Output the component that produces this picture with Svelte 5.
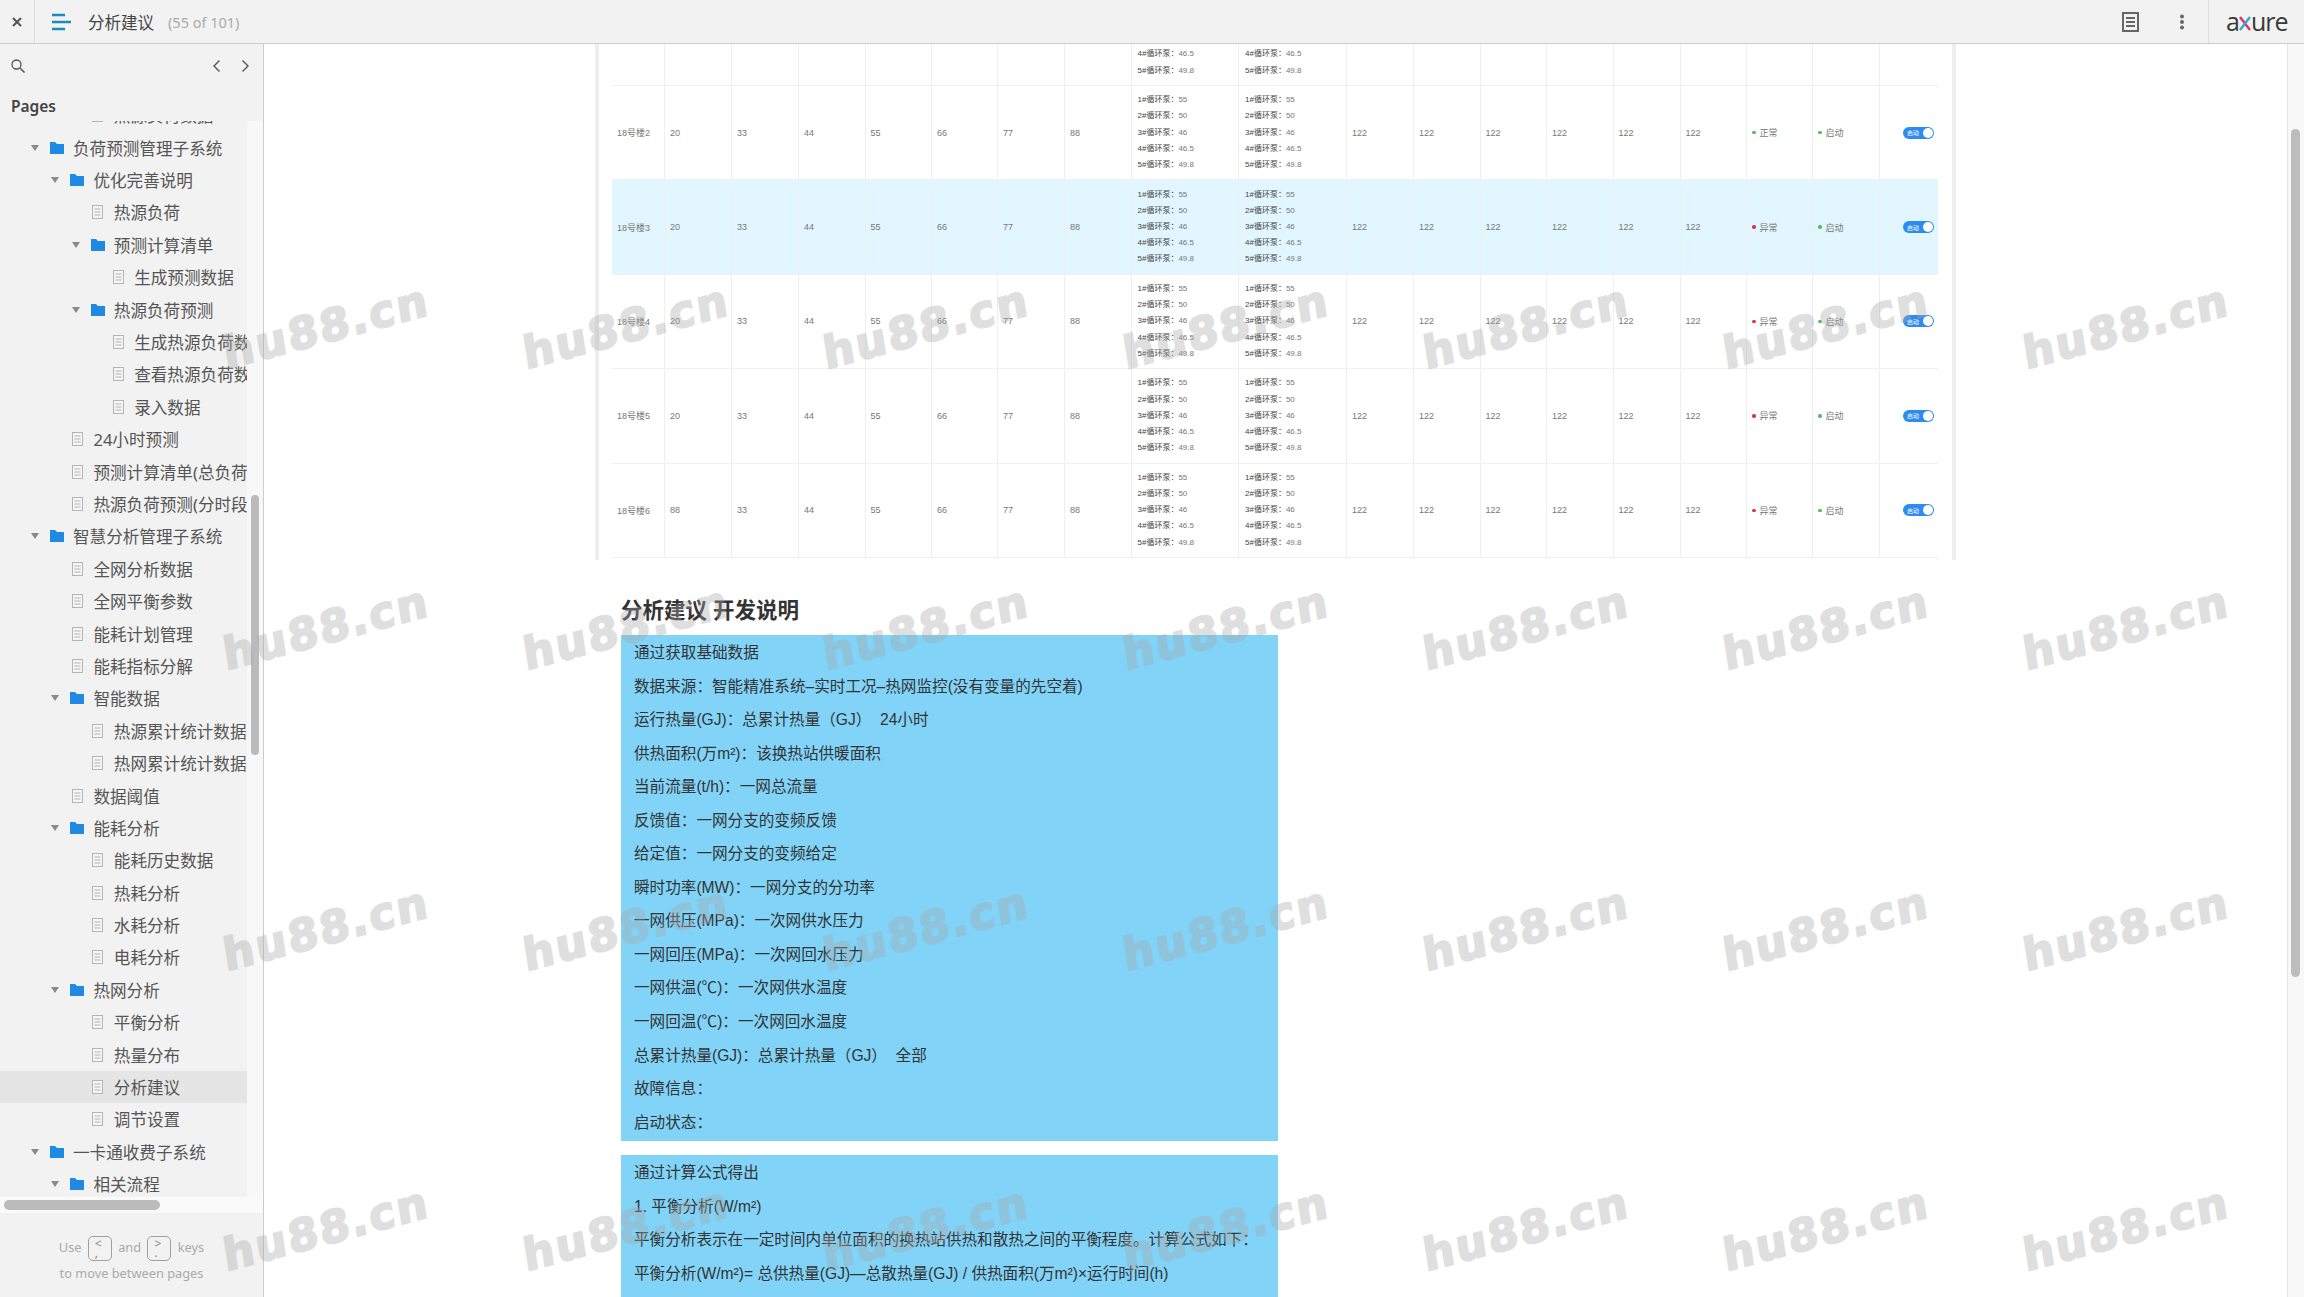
<script>
	// depth, type (f = folder, p = page), label
	const pages = [
		[2, 'p', '热源负荷数据'],
		[0, 'f', '负荷预测管理子系统'],
		[1, 'f', '优化完善说明'],
		[2, 'p', '热源负荷'],
		[2, 'f', '预测计算清单'],
		[3, 'p', '生成预测数据'],
		[2, 'f', '热源负荷预测'],
		[3, 'p', '生成热源负荷数据'],
		[3, 'p', '查看热源负荷数据'],
		[3, 'p', '录入数据'],
		[1, 'p', '24小时预测'],
		[1, 'p', '预测计算清单(总负荷预测)'],
		[1, 'p', '热源负荷预测(分时段)'],
		[0, 'f', '智慧分析管理子系统'],
		[1, 'p', '全网分析数据'],
		[1, 'p', '全网平衡参数'],
		[1, 'p', '能耗计划管理'],
		[1, 'p', '能耗指标分解'],
		[1, 'f', '智能数据'],
		[2, 'p', '热源累计统计数据'],
		[2, 'p', '热网累计统计数据'],
		[1, 'p', '数据阈值'],
		[1, 'f', '能耗分析'],
		[2, 'p', '能耗历史数据'],
		[2, 'p', '热耗分析'],
		[2, 'p', '水耗分析'],
		[2, 'p', '电耗分析'],
		[1, 'f', '热网分析'],
		[2, 'p', '平衡分析'],
		[2, 'p', '热量分布'],
		[2, 'p', '分析建议'],
		[2, 'p', '调节设置'],
		[0, 'f', '一卡通收费子系统'],
		[1, 'f', '相关流程']
	];

	const rows = [
		{ name: '18号楼1', first: '20', status: '正常', ok: true },
		{ name: '18号楼2', first: '20', status: '正常', ok: true },
		{ name: '18号楼3', first: '20', status: '异常', ok: false, active: true },
		{ name: '18号楼4', first: '20', status: '异常', ok: false },
		{ name: '18号楼5', first: '20', status: '异常', ok: false },
		{ name: '18号楼6', first: '88', status: '异常', ok: false }
	];
	const nums = ['33', '44', '55', '66', '77', '88'];
	const pumps = [
		['1#循环泵\uFF1A', '55'],
		['2#循环泵\uFF1A', '50'],
		['3#循环泵\uFF1A', '46'],
		['4#循环泵\uFF1A', '46.5'],
		['5#循环泵\uFF1A', '49.8']
	];
	const baseLines = [
		'通过获取基础数据',
		'数据来源\uFF1A智能精准系统–实时工况–热网监控(没有变量的先空着)',
		'运行热量(GJ)\uFF1A总累计热量\uFF08GJ\uFF09  24小时',
		'供热面积(万m²)\uFF1A该换热站供暖面积',
		'当前流量(t/h)\uFF1A一网总流量',
		'反馈值\uFF1A一网分支的变频反馈',
		'给定值\uFF1A一网分支的变频给定',
		'瞬时功率(MW)\uFF1A一网分支的分功率',
		'一网供压(MPa)\uFF1A一次网供水压力',
		'一网回压(MPa)\uFF1A一次网回水压力',
		'一网供温(℃)\uFF1A一次网供水温度',
		'一网回温(℃)\uFF1A一次网回水温度',
		'总累计热量(GJ)\uFF1A总累计热量\uFF08GJ\uFF09  全部',
		'故障信息\uFF1A',
		'启动状态\uFF1A'
	];
	const calcLines = [
		'通过计算公式得出',
		'1. 平衡分析(W/m²)',
		'平衡分析表示在一定时间内单位面积的换热站供热和散热之间的平衡程度。计算公式如下\uFF1A',
		'平衡分析(W/m²)= 总供热量(GJ)—总散热量(GJ) / 供热面积(万m²)×运行时间(h)'
	];
	const marks = Array.from({ length: 28 });
</script>

<div class="app">
	<header class="topbar">
		<div class="close">
			<svg width="12" height="12" viewBox="0 0 12 12"><path d="M2 2l8 8M10 2l-8 8" stroke="#555" stroke-width="2" /></svg>
		</div>
		<div class="title-wrap">
			<svg class="burger" width="20" height="20" viewBox="0 0 20 20">
				<path d="M0 3h13M0 10h19M0 17h13" stroke="#1b8dbb" stroke-width="2.4" />
			</svg>
			<span class="title">分析建议</span>
			<span class="count">(55 of 101)</span>
		</div>
		<div class="top-right">
			<svg width="17" height="20" viewBox="0 0 17 20">
				<rect x="1" y="1" width="15" height="18" fill="none" stroke="#666" stroke-width="2" />
				<path d="M4 6h9M4 10h9M4 14h9" stroke="#666" stroke-width="2" />
			</svg>
			<svg class="dots" width="6" height="16" viewBox="0 0 6 16">
				<circle cx="3" cy="2.5" r="2" fill="#666" /><circle cx="3" cy="8" r="2" fill="#666" /><circle cx="3" cy="13.5" r="2" fill="#666" />
			</svg>
		</div>
		<div class="logo">
			<span>a</span><svg width="12" height="15" viewBox="0 0 12 15"><path d="M1 1l10 13" stroke="#d6336c" stroke-width="2.4" /><path d="M11 1L1 14" stroke="#35a7c9" stroke-width="2.4" /></svg><span>ure</span>
		</div>
	</header>

	<div class="body">
		<aside class="sidebar">
			<div class="search-row">
				<svg width="14" height="14" viewBox="0 0 14 14"><circle cx="5.5" cy="5.5" r="4.5" fill="none" stroke="#555" stroke-width="1.3" /><path d="M9 9l4.5 4.5" stroke="#555" stroke-width="1.5" /></svg>
				<div class="pager">
					<svg width="9" height="14" viewBox="0 0 9 14"><path d="M7.5 1.5L2 7l5.5 5.5" fill="none" stroke="#555" stroke-width="1.4" /></svg>
					<svg width="9" height="14" viewBox="0 0 9 14"><path d="M1.5 1.5L7 7l-5.5 5.5" fill="none" stroke="#555" stroke-width="1.4" /></svg>
				</div>
			</div>
			<div class="pages-label">Pages</div>
			<div class="tree-area">
				<div class="tree">
					<div class="tree-inner">
						{#each pages as [depth, type, label]}
							<div class="node" class:selected={label === '分析建议'} style="padding-left: {31 + 20.4 * depth}px">
								<span class="arrow" class:hidden={type === 'p'}></span>
								<span class="node-icon">
									{#if type === 'f'}
										<svg width="14" height="12" viewBox="0 0 14 12"><path d="M0 0h5l2 2h7v10H0z" fill="#1f8ae4" /></svg>
									{:else}
										<svg width="11" height="14" viewBox="0 0 11 14"><rect x=".5" y=".5" width="10" height="13" fill="#f5f5f5" stroke="#b5b5b5" /><path d="M2.5 4h6M2.5 7h6M2.5 10h6" stroke="#b5b5b5" /></svg>
									{/if}
								</span>
								<span class="node-label">{label}</span>
							</div>
						{/each}
					</div>
				</div>
				<div class="vtrack"><div class="vthumb"></div></div>
			</div>
			<div class="htrack"><div class="hthumb"></div></div>
			<div class="hint">
				<div class="hint-line">Use <span class="key">&lt;<br />,</span> and <span class="key">&gt;<br />.</span> keys</div>
				<div>to move between pages</div>
			</div>
		</aside>

		<main class="main">
			<div class="content">
				<div class="table-frame">
					<div class="grid-table">
						{#each rows as row}
							<div class="tr" class:active={row.active}>
								<div class="td">{row.name}</div>
								<div class="td">{row.first}</div>
								{#each nums as n}
									<div class="td">{n}</div>
								{/each}
								{#each [0, 1] as col}
									<div class="td pump">
										{#each pumps as [k, v]}
											<div class="pump-line"><b>{k}</b>{v}</div>
										{/each}
									</div>
								{/each}
								{#each [0, 1, 2, 3, 4, 5] as c}
									<div class="td">122</div>
								{/each}
								<div class="td"><i class="dot" class:bad={!row.ok}></i>{row.status}</div>
								<div class="td"><i class="dot"></i>启动</div>
								<div class="td switch-cell">
									<span class="switch"><em>启动</em><u></u></span>
								</div>
							</div>
						{/each}
					</div>
				</div>

				<div class="notes">
					<h2>分析建议 开发说明</h2>
					<div class="box">
						{#each baseLines as line}
							<p>{line}</p>
						{/each}
					</div>
					<div class="box last">
						{#each calcLines as line}
							<p>{line}</p>
						{/each}
					</div>
				</div>
			</div>
			<div class="page-scroll"><div class="page-thumb"></div></div>
		</main>
	</div>

	<div class="watermarks" aria-hidden="true">
		{#each marks as _}
			<span>hu88.cn</span>
		{/each}
	</div>
</div>

<style>
	:global(body) {
		margin: 0;
		background: #fff;
	}

	.app {
		position: relative;
		width: 2304px;
		height: 1297px;
		overflow: hidden;
		display: flex;
		flex-direction: column;
		font-family: 'Noto Sans', 'Noto Sans CJK SC', sans-serif;
		color: #333;
	}

	/* ===== Top bar ===== */
	.topbar {
		flex: none;
		height: 44px;
		box-sizing: border-box;
		display: flex;
		align-items: center;
		background: #f2f2f2;
		border-bottom: 1px solid #ccc;
	}

	.close {
		width: 34px;
		height: 43px;
		display: flex;
		align-items: center;
		justify-content: center;
		border-right: 1px solid #ddd;
	}

	.title-wrap {
		display: flex;
		align-items: center;
		flex: 1;
		padding-left: 17px;
	}

	.burger {
		margin-right: 16px;
	}

	.title {
		font-size: 16.5px;
		color: #444;
		margin-right: 14px;
	}

	.count {
		font-size: 14.5px;
		color: #aaa;
	}

	.top-right {
		display: flex;
		align-items: center;
		gap: 40px;
		padding-right: 23px;
	}

	.logo {
		width: 96px;
		height: 43px;
		box-sizing: border-box;
		border-left: 1px solid #ddd;
		display: flex;
		align-items: center;
		padding-left: 17px;
		font-family: 'Open Sans', sans-serif;
		font-size: 25px;
		line-height: 1;
		color: #3a3a3a;
		letter-spacing: -1px;
	}

	.logo svg {
		margin: 3px 0 0;
	}

	/* ===== Sidebar ===== */
	.body {
		flex: 1;
		display: flex;
		min-height: 0;
	}

	.sidebar {
		flex: none;
		width: 264px;
		box-sizing: border-box;
		border-right: 1px solid #ccc;
		background: #f2f2f2;
		display: flex;
		flex-direction: column;
	}

	.search-row {
		height: 44px;
		display: flex;
		align-items: center;
		justify-content: space-between;
		padding: 0 13px 0 11px;
	}

	.pager {
		display: flex;
		gap: 20px;
	}

	.pages-label {
		height: 33px;
		padding-left: 11px;
		font-size: 15.5px;
		font-weight: 600;
		line-height: 36px;
		color: #444;
	}

	.tree-area {
		height: 1076px;
		display: flex;
	}

	.tree {
		width: 247px;
		overflow: hidden;
	}

	.tree-inner {
		margin-top: -21.9px;
	}

	.node {
		height: 32.4px;
		display: flex;
		align-items: center;
		white-space: nowrap;
		font-size: 16.6px;
		color: #555;
	}

	.node.selected {
		background: #e5e5e5;
	}

	.arrow {
		flex: none;
		width: 0;
		height: 0;
		margin-right: 11px;
		border-left: 4px solid transparent;
		border-right: 4px solid transparent;
		border-top: 6px solid #8a8a8a;
	}

	.arrow.hidden {
		border-top-color: transparent;
	}

	.node-icon {
		flex: none;
		width: 14px;
		display: flex;
		justify-content: center;
		margin-right: 9px;
	}

	.node-label {
		flex: none;
	}

	.vtrack {
		width: 16px;
		background: #f8f8f8;
	}

	.vthumb {
		width: 8px;
		height: 260px;
		margin: 374px 0 0 4px;
		border-radius: 4px;
		background: #bbb;
	}

	.htrack {
		height: 16px;
		background: #fafafa;
		display: flex;
		align-items: center;
		padding-left: 4px;
	}

	.hthumb {
		width: 156px;
		height: 10px;
		border-radius: 5px;
		background: #bbb;
	}

	.hint {
		flex: 1;
		padding-top: 18px;
		text-align: center;
		font-size: 12.8px;
		line-height: 20px;
		color: #aaa;
	}

	.hint-line {
		height: 32px;
		line-height: 32px;
	}

	.key {
		display: inline-block;
		box-sizing: border-box;
		width: 24px;
		height: 25px;
		margin: 0 3px;
		padding: 2px 0 0 6px;
		border: 1.5px solid #a0a0a0;
		border-radius: 5px;
		font-size: 12px;
		line-height: 9px;
		color: #888;
		text-align: left;
		vertical-align: middle;
	}

	/* ===== Main ===== */
	.main {
		flex: 1;
		display: flex;
		min-width: 0;
		overflow: hidden;
	}

	.content {
		flex: 1;
		margin-top: -52.4px;
		padding-left: 331px;
	}

	.table-frame {
		box-sizing: border-box;
		width: 1361px;
		padding: 0 14px;
		border-left: 4px solid #eee;
		border-right: 4px solid #eee;
		height: 568.4px;
	}

	.grid-table {
		font-family: 'Liberation Sans', 'Noto Sans CJK SC', sans-serif;
		font-size: 9px;
		color: #777;
		width: 1326px;
		margin-left: -1px;
	}

	.tr {
		display: grid;
		grid-template-columns: 53px 67px 67px 66.5px 66.5px 66px 67px 66.5px 107.5px 108px 67px 66.5px 66.5px 66.5px 67px 66.5px 66px 67px 58px;
		height: 94.4px;
		box-sizing: border-box;
		border-bottom: 1px solid #f0f0f0;
	}

	.tr.active {
		background: #e2f6ff;
	}

	.td {
		display: flex;
		align-items: center;
		box-sizing: border-box;
		padding-left: 5px;
		border-right: 1px solid #efefef;
		white-space: nowrap;
	}

	.td:last-child {
		border-right: none;
	}

	.pump {
		flex-direction: column;
		align-items: flex-start;
		justify-content: center;
		padding-left: 6px;
	}

	.pump-line {
		height: 16.2px;
		line-height: 16.2px;
		font-size: 8px;
	}

	.pump-line b {
		font-weight: 400;
		color: #444;
	}

	.dot {
		width: 3.5px;
		height: 3.5px;
		border-radius: 50%;
		background: #5cb85c;
		margin-right: 4px;
		flex: none;
	}

	.dot.bad {
		background: #d9363e;
	}

	.switch-cell {
		justify-content: flex-end;
		padding: 0 4px 0 0;
	}

	.switch {
		display: flex;
		align-items: center;
		justify-content: space-between;
		width: 31px;
		height: 12px;
		box-sizing: border-box;
		padding: 0 1px 0 4px;
		border-radius: 6px;
		background: #2d8cf0;
	}

	.switch em {
		font-style: normal;
		font-size: 6px;
		color: #fff;
	}

	.switch u {
		width: 10px;
		height: 10px;
		border-radius: 50%;
		background: #fff;
	}

	.notes {
		padding-left: 26px;
	}

	.notes h2 {
		margin: 0;
		padding-top: 35px;
		height: 32px;
		margin-bottom: 8px;
		font-family: 'Liberation Sans', 'Noto Sans CJK SC', sans-serif;
		font-size: 21.5px;
		font-weight: 700;
		line-height: 32px;
		color: #333;
	}

	.box {
		width: 657px;
		margin-bottom: 14px;
		padding: 1px 0 2px 13px;
		box-sizing: border-box;
		background: #81d3f8;
		font-family: 'Liberation Sans', 'Noto Sans CJK SC', sans-serif;
		font-size: 15.6px;
		color: #333;
	}

	.box.last {
		padding-bottom: 40px;
	}

	.box p {
		margin: 0;
		height: 33.55px;
		line-height: 33.55px;
		white-space: pre;
	}

	.page-scroll {
		flex: none;
		width: 17px;
		box-sizing: border-box;
		background: #f8f8f8;
		border-left: 1px solid #e5e5e5;
	}

	.page-thumb {
		width: 9px;
		height: 848px;
		margin: 85px 0 0 3px;
		border-radius: 5px;
		background: #bdbdbd;
	}

	/* ===== Watermark layer ===== */
	.watermarks {
		position: absolute;
		top: 176px;
		left: 176px;
		display: grid;
		grid-template-columns: repeat(7, 300px);
		grid-auto-rows: 300.8px;
		pointer-events: none;
	}

	.watermarks span {
		display: flex;
		align-items: center;
		justify-content: center;
		font-family: 'DejaVu Sans', sans-serif;
		font-size: 44px;
		font-weight: 700;
		letter-spacing: 2px;
		color: #a8a8a8;
		-webkit-text-stroke: 2px #a8a8a8;
		opacity: 0.36;
		transform: rotate(-15deg) skewX(-6deg);
	}
</style>
